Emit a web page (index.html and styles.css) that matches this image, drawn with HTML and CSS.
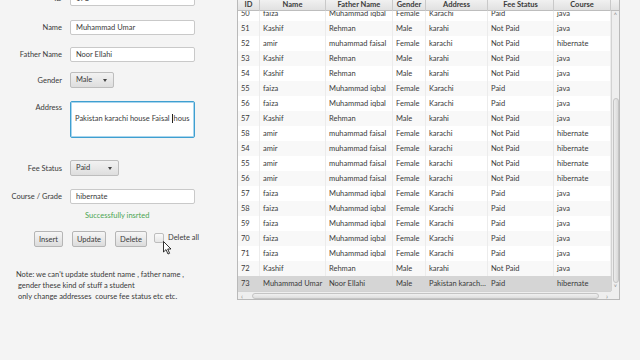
FILE: index.html
```html
<!DOCTYPE html>
<html lang="en">
<head>
    <meta charset="UTF-8">
    <title>Student Record</title>
    <link rel="stylesheet" href="styles.css">
</head>
<body>

<div class="window">
    <div class="form">
        <div class="row"><label>ID</label><div class="field">173</div></div>
        <div class="row r-name"><label>Name</label><div class="field">Muhammad Umar</div></div>
        <div class="row r-father"><label>Father Name</label><div class="field">Noor Ellahi</div></div>
        <div class="row r-gender"><label>Gender</label><div class="combo combo-gender">Male<span class="arrow"></span></div></div>
        <div class="row r-address"><label>Address</label>
            <div class="area">Pakistan karachi house Faisal <span class="caret"></span>hous</div>
        </div>
        <div class="row r-fee"><label>Fee Status</label><div class="combo combo-fee">Paid<span class="arrow"></span></div></div>
        <div class="row r-course"><label>Course / Grade</label><div class="field">hibernate</div></div>

        <div class="message">Successfully insrted</div>

        <div class="buttons">
            <button class="btn btn-insert">Insert</button>
            <button class="btn btn-update">Update</button>
            <button class="btn btn-delete">Delete</button>
            <span class="check"></span><span class="check-label">Delete all</span>
        </div>

        <div class="note">
            Note: we can't update student name , father name ,<br>
            &nbsp;gender these kind of stuff a student<br>
            &nbsp;only change addresses &nbsp;course fee status etc etc.
        </div>
    </div>

    <div class="table">
        <div class="thead">
            <div class="th">ID</div>
            <div class="th">Name</div>
            <div class="th">Father Name</div>
            <div class="th">Gender</div>
            <div class="th">Address</div>
            <div class="th">Fee Status</div>
            <div class="th">Course</div>
        </div>
        <div class="th-corner"></div>

        <div class="tbody">
            <div id="rows" class="rows"></div>
        </div>

        <div class="vscroll">
            <span class="sb-arrow">&#708;</span>
            <span class="vthumb"></span>
            <span class="sb-arrow">&#709;</span>
        </div>

        <div class="hscroll">
            <span class="sb-arrow">&lsaquo;</span>
            <span class="hthumb"></span>
            <span class="sb-arrow">&rsaquo;</span>
        </div>
        <div class="sb-corner"></div>
    </div>
</div>

<svg class="cursor" width="10" height="14" viewBox="0 0 10 14">
    <path d="M0.5 0.5 L0.5 11 L3 8.6 L5 13 L6.6 12.3 L4.7 8 L8 8 Z" fill="#fff" stroke="#000" stroke-width="0.8" stroke-linejoin="round"/>
</svg>

<script>
    var students = [
        ['50', 'faiza', 'Muhammad iqbal', 'Female', 'Karachi', 'Paid', 'java'],
        ['51', 'Kashif', 'Rehman', 'Male', 'karahi', 'Not Paid', 'java'],
        ['52', 'amir', 'muhammad faisal', 'Female', 'karachi', 'Not Paid', 'hibernate'],
        ['53', 'Kashif', 'Rehman', 'Male', 'karahi', 'Not Paid', 'java'],
        ['54', 'Kashif', 'Rehman', 'Male', 'karahi', 'Not Paid', 'java'],
        ['55', 'faiza', 'Muhammad iqbal', 'Female', 'Karachi', 'Paid', 'java'],
        ['56', 'faiza', 'Muhammad iqbal', 'Female', 'Karachi', 'Paid', 'java'],
        ['57', 'Kashif', 'Rehman', 'Male', 'karahi', 'Not Paid', 'java'],
        ['58', 'amir', 'muhammad faisal', 'Female', 'karachi', 'Not Paid', 'hibernate'],
        ['54', 'amir', 'muhammad faisal', 'Female', 'karachi', 'Not Paid', 'hibernate'],
        ['55', 'amir', 'muhammad faisal', 'Female', 'karachi', 'Not Paid', 'hibernate'],
        ['56', 'amir', 'muhammad faisal', 'Female', 'karachi', 'Not Paid', 'hibernate'],
        ['57', 'faiza', 'Muhammad iqbal', 'Female', 'Karachi', 'Paid', 'java'],
        ['58', 'faiza', 'Muhammad iqbal', 'Female', 'Karachi', 'Paid', 'java'],
        ['59', 'faiza', 'Muhammad iqbal', 'Female', 'Karachi', 'Paid', 'java'],
        ['70', 'faiza', 'Muhammad iqbal', 'Female', 'Karachi', 'Paid', 'java'],
        ['71', 'faiza', 'Muhammad iqbal', 'Female', 'Karachi', 'Paid', 'java'],
        ['72', 'Kashif', 'Rehman', 'Male', 'karahi', 'Not Paid', 'java'],
        ['73', 'Muhammad Umar', 'Noor Ellahi', 'Male', 'Pakistan karachi house Faisal', 'Paid', 'hibernate']
    ];

    var list = document.getElementById('rows');
    students.forEach(function (s, i) {
        var row = document.createElement('div');
        row.className = 'tr';
        if (i % 2 == 1) row.className += ' odd';
        if (i == students.length - 1) row.className += ' selected';
        row.innerHTML = s.map(function (v) {
            return '<div class="td">' + v + '</div>';
        }).join('');
        list.appendChild(row);
    });
</script>

</body>
</html>
```

FILE: styles.css
```css
body {
    margin: 0;
    background-color: #f4f4f4;
    font-family: Lato, "Open Sans", sans-serif;
    font-size: 7.5px;
    color: #3a3a3a;
    overflow: hidden;
}

.window {
    display: flex;
    align-items: flex-start;
    margin-top: -9px;
}

/* ---- left form ---- */
.form {
    width: 237px;
    flex: none;
}

.row {
    display: flex;
    align-items: center;
}
.row label {
    width: 62px;
    margin-right: 8px;
    text-align: right;
}

.r-name { margin-top: 14px; }
.r-father { margin-top: 12px; }
.r-gender { margin-top: 10px; }
.r-address { margin-top: 13px; align-items: flex-start; }
.r-address label { padding-top: 2px; }
.r-fee { margin-top: 22px; }
.r-course { margin-top: 13px; }

.field {
    width: 125px;
    height: 15px;
    box-sizing: border-box;
    padding: 0 5px;
    line-height: 13px;
    background: #fff;
    border: 1px solid #c9c9c9;
    border-radius: 2px;
}

.area {
    width: 125px;
    height: 37px;
    box-sizing: border-box;
    padding: 12px 0 0 4px;
    background: #fff;
    border: 1px solid #3f9fd0;
    box-shadow: inset 0 0 0 1px #a9d6ee;
    border-radius: 2px;
    white-space: nowrap;
    overflow: hidden;
}
.caret {
    display: inline-block;
    width: 1px;
    height: 9px;
    margin-right: 1px;
    vertical-align: -2px;
    background: #222;
}

.combo {
    position: relative;
    height: 16px;
    box-sizing: border-box;
    padding-left: 5px;
    line-height: 14px;
    background: linear-gradient(#f2f2f2, #dedede);
    border: 1px solid #bdbdbd;
    border-radius: 2px;
}
.combo-gender { width: 44px; }
.combo-fee { width: 49px; }
.combo .arrow {
    position: absolute;
    right: 6px;
    top: 6px;
    border-left: 2.5px solid transparent;
    border-right: 2.5px solid transparent;
    border-top: 3px solid #444;
}

.message {
    margin: 7px 0 0 85px;
    line-height: 10px;
    color: #4aa552;
}

.buttons {
    display: flex;
    align-items: center;
    margin: 10px 0 0 34px;
}
.btn {
    height: 16px;
    margin-right: 9px;
    padding: 0;
    font-family: inherit;
    font-size: 7.5px;
    color: #3a3a3a;
    background: linear-gradient(#f6f6f6, #dcdcdc);
    border: 1px solid #b5b5b5;
    border-radius: 2px;
}
.btn-insert { width: 29px; }
.btn-update { width: 34px; }
.btn-delete { width: 32px; margin-right: 7px; }

.check {
    width: 10px;
    height: 10px;
    box-sizing: border-box;
    background: linear-gradient(#fafafa, #e6e6e6);
    border: 1px solid #bdbdbd;
    border-radius: 2px;
    margin-right: 4px;
    margin-top: -3px;
}
.check-label { margin-top: -4px; }

.note {
    margin: 22px 0 0 16px;
    line-height: 11px;
}

/* ---- table ---- */
.table {
    display: grid;
    grid-template-columns: 373px 8px;
    grid-template-rows: 13px 280px 8px;
    margin-top: 6px;
    background: #fff;
    border: 1px solid #b9b9b9;
}

.thead,
.tr {
    display: grid;
    grid-template-columns: 22px 66px 67px 33px 62px 66px 57px;
}
.thead {
    background: linear-gradient(#f4f4f4, #e1e1e1);
    border-bottom: 1px solid #bdbdbd;
    box-sizing: border-box;
}
.th {
    font-weight: bold;
    text-align: center;
    line-height: 13px;
    border-right: 1px solid #c9c9c9;
}
.th-corner {
    background: linear-gradient(#f4f4f4, #e1e1e1);
    border-bottom: 1px solid #bdbdbd;
}

.tbody {
    overflow: hidden;
}
.rows {
    margin-top: -5px;
}
.tr {
    height: 15px;
    line-height: 15px;
    background: #fff;
}
.tr.odd {
    background: #f8f8f8;
}
.tr.selected {
    background: #d5d5d5;
}
.td {
    padding-left: 3px;
    border-right: 1px solid #ececec;
    white-space: nowrap;
    overflow: hidden;
    text-overflow: ellipsis;
}
.tr.selected .td {
    border-right-color: #d5d5d5;
}

.vscroll {
    display: flex;
    flex-direction: column;
    align-items: center;
    background: #eeeeee;
    border-left: 1px solid #d2d2d2;
}
.vthumb {
    width: 6px;
    height: 185px;
    margin-top: auto;
    box-sizing: border-box;
    background: linear-gradient(90deg, #ececec, #dadada);
    border: 1px solid #c4c4c4;
    border-radius: 3px;
}

.hscroll {
    display: flex;
    align-items: center;
    background: #eeeeee;
    border-top: 1px solid #d2d2d2;
}
.hthumb {
    flex: 1;
    height: 6px;
    margin: 0 4px 0 6px;
    box-sizing: border-box;
    background: linear-gradient(#f0f0f0, #dedede);
    border: 1px solid #c4c4c4;
    border-radius: 3px;
}
.sb-arrow {
    font-size: 7px;
    line-height: 8px;
    width: 8px;
    text-align: center;
    color: #888;
}
.sb-corner {
    background: #eeeeee;
}

.cursor {
    position: absolute;
    left: 163px;
    top: 241px;
}
```
